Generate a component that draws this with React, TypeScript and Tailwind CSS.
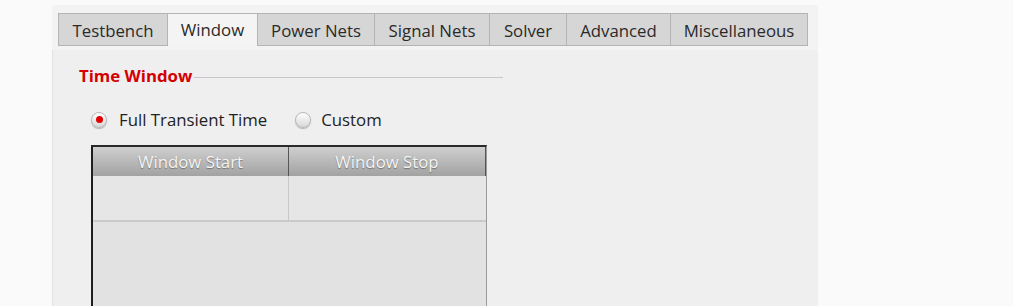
const tabs = ['Testbench', 'Window', 'Power Nets', 'Signal Nets', 'Solver', 'Advanced', 'Miscellaneous'];
const tabWidths = ['w-[109px]', 'w-[90px]', 'w-[117px]', 'w-[115px]', 'w-[77px]', 'w-[104px]', 'w-[138px]'];

function Radio({ checked }: { checked: boolean }) {
  return (
    <span className="relative flex h-[16px] w-[16px] items-center justify-center rounded-full border border-[#b8b8b8] bg-gradient-to-b from-[#ffffff] to-[#d8d8d8] shadow-[0_1px_1px_rgba(0,0,0,0.25)]">
      {checked && <span className="h-[7px] w-[7px] rounded-full bg-[#e00000]" />}
    </span>
  );
}

export default function App() {
  return (
    <div className="h-[306px] w-[1013px] overflow-hidden bg-[#fafafa] font-['Open_Sans',sans-serif]">
      <div className="ml-[52px] mt-[5px] flex h-[301px] w-[766px] flex-col bg-[#f3f3f3]">
        <div className="flex pl-[6px] pt-[8px]">
          {tabs.map((t, i) => (
            <div
              key={t}
              className={`flex h-[33px] items-center justify-center border-t border-l border-[#b4b4b4] pt-[3px] text-[16.8px] text-[#2a2a2a] ${tabWidths[i]} ${
                i === tabs.length - 1 ? 'border-r' : ''
              } ${i === 1 ? 'bg-[#f4f4f4] pb-[3px]' : 'border-b bg-[#d6d6d6]'}`}
            >
              {t}
            </div>
          ))}
        </div>
        <div className="mt-[4px] flex-1 border-l border-[#e2e2e2] bg-[#efefef] pl-[26px] pt-[14px]">
          <div className="flex items-center">
            <span className="text-[16.8px] font-bold leading-[24px] text-[#d40000]">Time Window</span>
            <div className="ml-[2px] mt-[2px] h-px w-[309px] bg-[#cbc3cb]" />
          </div>
          <div className="mt-[19px] flex items-center pl-[12px] text-[16.8px] text-[#222]">
            <Radio checked />
            <span className="ml-[12px]">Full Transient Time</span>
            <span className="ml-[28px]"><Radio checked={false} /></span>
            <span className="ml-[10px]">Custom</span>
          </div>
          <div className="ml-[12px] mt-[13px] h-[200px] w-[396px] border-t-[2px] border-l-[2px] border-r border-t-[#2a2a2a] border-l-[#1e1e1e] border-r-[#9a9a9a] bg-[#e2e2e2]">
            <div className="flex h-[29px] bg-gradient-to-b from-[#cfcfcf] to-[#a2a2a2] text-[16.8px] text-[#f4f4f4] [text-shadow:0_1px_1px_rgba(0,0,0,0.35)]">
              <div className="flex w-[196px] items-center justify-center border-r border-[#555]">Window Start</div>
              <div className="flex flex-1 items-center justify-center border-r border-[#555]">Window Stop</div>
            </div>
            <div className="flex h-[46px] border-b-[2px] border-[#cacaca] bg-[#e6e6e6]">
              <div className="w-[196px] border-r border-[#c8c8c8]" />
              <div className="flex-1" />
            </div>
          </div>
        </div>
      </div>
    </div>
  );
}
